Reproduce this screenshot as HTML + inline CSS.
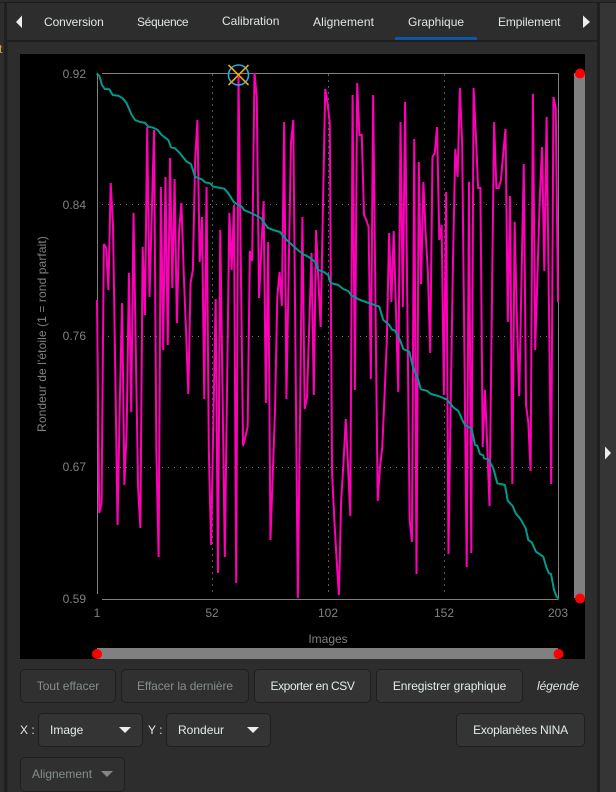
<!DOCTYPE html>
<html><head><meta charset="utf-8"><style>
html,body{margin:0;padding:0;background:#2d2d2d}
#r{position:relative;width:616px;height:792px;overflow:hidden;background:#2d2d2d;font-family:"Liberation Sans",sans-serif;font-size:12px;color:#dfe6e6}
#r div{position:absolute;box-sizing:border-box}
.t{white-space:nowrap;line-height:16px;height:16px}
.b{background:#343434;border:1px solid #1f1f1f;border-radius:5px;text-align:center;line-height:32px;white-space:nowrap;color:#e2ecec}
.d{color:#858d8d;background:#303030}
.l{color:#808080;white-space:nowrap;line-height:14px;height:14px}
svg{position:absolute;left:0;top:0}
</style></head><body><div id="r">
<div style="left:0;top:0;width:616px;height:3px;background:#2b2b2b"></div>
<div style="left:0;top:2px;width:616px;height:1px;background:#1d1d1d"></div>
<div style="left:4px;top:3px;width:3px;height:789px;background:#202020"></div>
<div style="left:7px;top:40px;width:590px;height:2px;background:#202020"></div>
<div style="left:7px;top:42px;width:1px;height:750px;background:#262626"></div>
<div style="left:597px;top:3px;width:3px;height:789px;background:#1f1f1f"></div>
<div style="left:600px;top:3px;width:16px;height:789px;background:#353535"></div>
<div class="t" style="left:0;top:41px;width:3px;overflow:hidden;color:#e89a3c;font-size:12px;text-indent:-1px">t</div>

<div class="t" style="left:44px;top:14px;letter-spacing:-.1px">Conversion</div>
<div class="t" style="left:137px;top:14px;letter-spacing:-.35px">Séquence</div>
<div class="t" style="left:222px;top:13px">Calibration</div>
<div class="t" style="left:313px;top:14px;letter-spacing:.1px">Alignement</div>
<div class="t" style="left:408px;top:14px">Graphique</div>
<div class="t" style="left:498px;top:14px;letter-spacing:-.1px">Empilement</div>
<div style="left:395px;top:37px;width:82px;height:3px;background:#0f55a5"></div>

<div style="left:20px;top:54px;width:565px;height:605px;background:#000"></div>
<div style="left:574px;top:73px;width:11px;height:525px;background:#808080"></div>
<div style="left:97px;top:648px;width:461px;height:11px;background:#808080"></div>

<div class="l" style="left:55px;top:67px;width:31px;text-align:right">0.92</div>
<div class="l" style="left:55px;top:198px;width:31px;text-align:right">0.84</div>
<div class="l" style="left:55px;top:329px;width:31px;text-align:right">0.76</div>
<div class="l" style="left:55px;top:460px;width:31px;text-align:right">0.67</div>
<div class="l" style="left:55px;top:592px;width:31px;text-align:right">0.59</div>
<div class="l" style="left:77px;top:606px;width:40px;text-align:center">1</div>
<div class="l" style="left:192px;top:606px;width:40px;text-align:center">52</div>
<div class="l" style="left:308px;top:606px;width:40px;text-align:center">102</div>
<div class="l" style="left:424px;top:606px;width:40px;text-align:center">152</div>
<div class="l" style="left:538px;top:606px;width:40px;text-align:center">203</div>
<div class="l" style="left:298px;top:632px;width:60px;text-align:center">Images</div>
<div class="l" style="left:-58px;top:327px;width:200px;text-align:center;transform:rotate(-90deg);letter-spacing:.1px">Rondeur de l'étoile (1 = rond parfait)</div>

<svg width="616" height="792" viewBox="0 0 616 792" fill="none">
<g stroke="#5a5a5a" stroke-width="1" stroke-dasharray="2 4">
<path d="M212.500 74V594M328.500 74V594M444.500 74V594"/>
<path d="M102 204.500H558M102 336.500H558M102 467.500H558" stroke="#777" stroke-dasharray="1 5"/>
</g>
<path d="M102 73.500H558.500V599M97.500 73V594M102 599.500H558.500" stroke="#808080" stroke-width="1"/>
<polyline transform="translate(97,0) scale(2.2822,1)" vector-effect="non-scaling-stroke" stroke="#ff00b8" stroke-width="2" stroke-linejoin="miter" stroke-miterlimit="3" points="0,300 1,513 2,503 3,244 4,248 5,290 6,183 7,225 8,370 9,525 10,400 11,303 12,485 13,430 14,273 15,412 16,213 17,350 18,487 19,528 20,247 21,315 22,127 23,297 24,214 25,130 26,450 27,557 28,187 29,350 30,177 31,345 32,158 33,288 34,179 35,323 36,230 37,203 38,273 39,330 40,394 41,283 42,270 43,160 44,120 45,262 46,217 47,399 48,187 49,450 50,545 51,420 52,299 53,573 54,230 55,390 56,557 57,385 58,213 59,270 60,205 61,583 62,77 63,260 64,446 65,437 66,427 67,251 68,261 69,73 70,97 71,298 72,250 73,201 74,403 75,242 76,540 77,475 78,410 79,297 80,272 81,306 82,122 83,399 84,270 85,143 86,120 87,360 88,598 89,407 90,217 91,409 92,398 93,325 94,253 95,395 96,230 97,280 98,327 99,208 100,89 101,103 102,123 103,473 104,520 105,560 106,595 107,500 108,463 109,419 110,467 111,516 112,95 113,390 114,83 115,135 116,135 117,215 118,220 119,227 120,379 121,95 122,300 123,501 124,467 125,447 126,395 127,340 128,233 129,302 130,231 131,310 132,392 133,122 134,307 135,102 136,310 137,520 138,542 139,139 140,574 141,162 142,284 143,182 144,233 145,273 146,353 147,157 148,153 149,127 150,240 151,225 152,395 153,192 154,554 155,400 156,260 157,149 158,177 159,88 160,143 161,355 162,567 163,182 164,553 165,88 166,135 167,188 168,188 169,447 170,390 171,447 172,506 173,310 174,122 175,188 176,188 177,180 178,153 179,129 180,322 181,196 182,484 183,222 184,320 185,396 186,280 187,164 188,405 189,423 190,471 191,94 192,350 193,275 194,200 195,147 196,271 197,117 198,300 199,484 200,97 201,108 202,302"/>
<polyline stroke="#009a8e" stroke-width="2" stroke-linejoin="round" points="96.700,73.300 99.300,76 102,85 104.700,89 109.300,89.300 112.700,95 118.300,95.700 122.700,98.300 126.700,103.300 131.700,115 135,120 140,122 145,122.700 148.300,126.700 153.300,127.700 157.700,130 161.700,135 168.300,140 171,147.300 175,148.300 180,153.300 186.700,161.700 191,164 195,176.700 201.700,179.300 205,182.300 210,183.300 213.300,186.700 224.300,188.700 228.300,193.300 234,202.300 241.700,206.700 244,210 253.300,214 261,218.300 267.700,227.700 273.300,230 280,232 286.700,240 296.700,249 303.300,254.300 308.300,256.700 315,261.700 318.300,270 323.300,271.700 328.300,275 330,281.700 331.700,283.300 338.300,285 343.300,289 348.300,291 351.700,296 355,296.700 358.300,299.300 371.700,304 379.300,306.700 383.300,320 389.300,325 391.700,329.300 395,330.700 400,340 403.300,349 409.300,351.700 413.300,368.300 418.300,380 420.700,389.300 426.700,390.700 431,394 438.300,396 446.700,399.300 453.300,407.300 458.300,411 462.700,420.700 465,425 471.700,429 475,445 477.300,445.700 480,454 483.300,455.300 484,458.300 488.300,459.300 493.300,468.300 497.300,483.300 505,485 507.700,500.700 512.700,506 515.700,513.300 520.700,519.300 525.700,528.300 528.300,540 531.700,542.300 536,551.700 543.300,556.700 546.700,568.300 549,573.300 551,574 554,590 556.700,596.700 558.700,598.700"/>
<circle cx="238.500" cy="75" r="10" stroke="#2aa8e0" stroke-width="1.600"/>
<path d="M228.500 65L248.500 85M248.500 65L228.500 85" stroke="#eba40e" stroke-width="1.600"/>
<circle cx="580" cy="73.500" r="5" fill="#f00"/>
<circle cx="580" cy="598.500" r="5" fill="#f00"/>
<circle cx="97" cy="654" r="5" fill="#f00"/>
<circle cx="558.500" cy="654" r="5" fill="#f00"/>
<path d="M22 15.500L16 22L22 28Z" fill="#eee"/>
<path d="M583 15.500L590 22L583 28Z" fill="#eee"/>
<path d="M605 446.500L611 453L605 459.500Z" fill="#eee"/>
</svg>

<div class="b d" style="left:20px;top:669px;width:96px;height:34px">Tout effacer</div>
<div class="b d" style="left:121px;top:669px;width:128px;height:34px;letter-spacing:-.1px">Effacer la dernière</div>
<div class="b" style="left:254px;top:669px;width:117px;height:34px;letter-spacing:-.4px">Exporter en CSV</div>
<div class="b" style="left:376px;top:669px;width:147px;height:34px;letter-spacing:-.1px">Enregistrer graphique</div>
<div class="t" style="left:537px;top:678px;font-style:italic;letter-spacing:-.1px">légende</div>

<div class="t" style="left:20px;top:722px">X :</div>
<div class="b" style="left:38px;top:713px;width:105px;height:34px;text-align:left;padding-left:11px">Image</div>
<div class="t" style="left:148px;top:722px">Y :</div>
<div class="b" style="left:166px;top:713px;width:105px;height:34px;text-align:left;padding-left:11px">Rondeur</div>
<div class="b" style="left:456px;top:713px;width:129px;height:34px;letter-spacing:-.2px">Exoplanètes NINA</div>
<div class="b d" style="left:20px;top:757px;width:105px;height:35px;text-align:left;padding-left:11px">Alignement</div>
<svg width="616" height="792" viewBox="0 0 616 792">
<path d="M119 727H131L125 733Z" fill="#eee"/>
<path d="M247 727H259L253 733Z" fill="#eee"/>
<path d="M101 771H113L107 777Z" fill="#858585"/>
</svg>
</div></body></html>
